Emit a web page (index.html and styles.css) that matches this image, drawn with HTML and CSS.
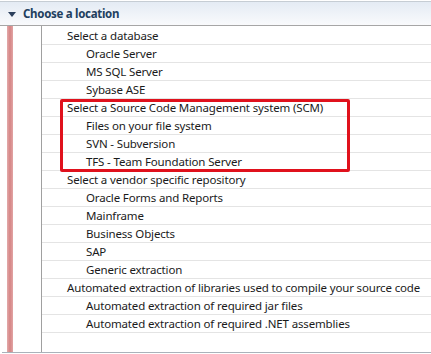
FILE: index.html
```html
<!DOCTYPE html>
<html>
   <head>
      <link rel="stylesheet" href="styles.css">
   </head>
   <body>
<div class="section-head">
   <svg class="twisty" width="8" height="5" viewBox="0 0 8 5"><polygon points="0,0 8,0 4,5" fill="#2b3f5c"/></svg>
   <span class="section-title">Choose a location</span>
</div>
<div class="section-body">
   <div class="gutter"><div class="marker"></div></div>
   <div class="choices">
      <div class="row">Select a database</div>
      <div class="row sub">Oracle Server</div>
      <div class="row sub">MS SQL Server</div>
      <div class="row sub">Sybase ASE</div>
      <div class="group">
         <div class="row">Select a Source Code Management system (SCM)</div>
         <div class="row sub">Files on your file system</div>
         <div class="row sub">SVN - Subversion</div>
         <div class="row sub">TFS - Team Foundation Server</div>
      </div>
      <div class="row">Select a vendor specific repository</div>
      <div class="row sub">Oracle Forms and Reports</div>
      <div class="row sub">Mainframe</div>
      <div class="row sub">Business Objects</div>
      <div class="row sub">SAP</div>
      <div class="row sub">Generic extraction</div>
      <div class="row">Automated extraction of libraries used to compile your source code</div>
      <div class="row sub">Automated extraction of required jar files</div>
      <div class="row sub">Automated extraction of required .NET assemblies</div>
   </div>
</div>
</body>
</html>
```

FILE: styles.css
```css
* {
	margin: 0;
	padding: 0;
	box-sizing: border-box;
}
body {
	background: #fff;
	font-family: "Noto Sans", "DejaVu Sans", sans-serif;
	font-size: 11.5px;
	letter-spacing: -0.15px;
	color: #1b1b1b;
	width: 431px;
	overflow: hidden;
}
.section-head {
	margin-top: 1px;
	height: 25px;
	border-top: 1px solid #c6cdd4;
	border-bottom: 1px solid #a6a6a6;
	background: linear-gradient(to bottom, #e4ebf4, #f9fafc);
	display: flex;
	align-items: center;
	padding-left: 8px;
}
.twisty {
	margin-right: 7px;
	margin-top: 1px;
}
.section-title {
	font-weight: bold;
	font-size: 11.5px;
	letter-spacing: -0.3px;
	color: #22405f;
}
.section-body {
	display: flex;
	height: 327px;
	margin-left: 2px;
	border-bottom: 1px solid #aab2ba;
}
.gutter {
	flex: 0 0 39px;
	padding-left: 5px;
}
.marker {
	width: 6px;
	height: 100%;
	background: linear-gradient(to right, #e3aaaa, #d58585 50%, #e2a4a4);
}
.choices {
	flex: 1;
	min-width: 0;
	border-left: 1px solid #a0a0a0;
	padding-top: 1px;
}
.row {
	height: 18px;
	line-height: 17px;
	border-bottom: 1px solid #e4e4e4;
	padding-left: 25px;
	white-space: nowrap;
}
.sub {
	padding-left: 44px;
}
.group {
	position: relative;
}
.group::after {
	content: "";
	position: absolute;
	left: 18px;
	right: 81px;
	top: 0;
	bottom: -1px;
	border: 3px solid #e0111c;
	border-radius: 2px;
}
```
